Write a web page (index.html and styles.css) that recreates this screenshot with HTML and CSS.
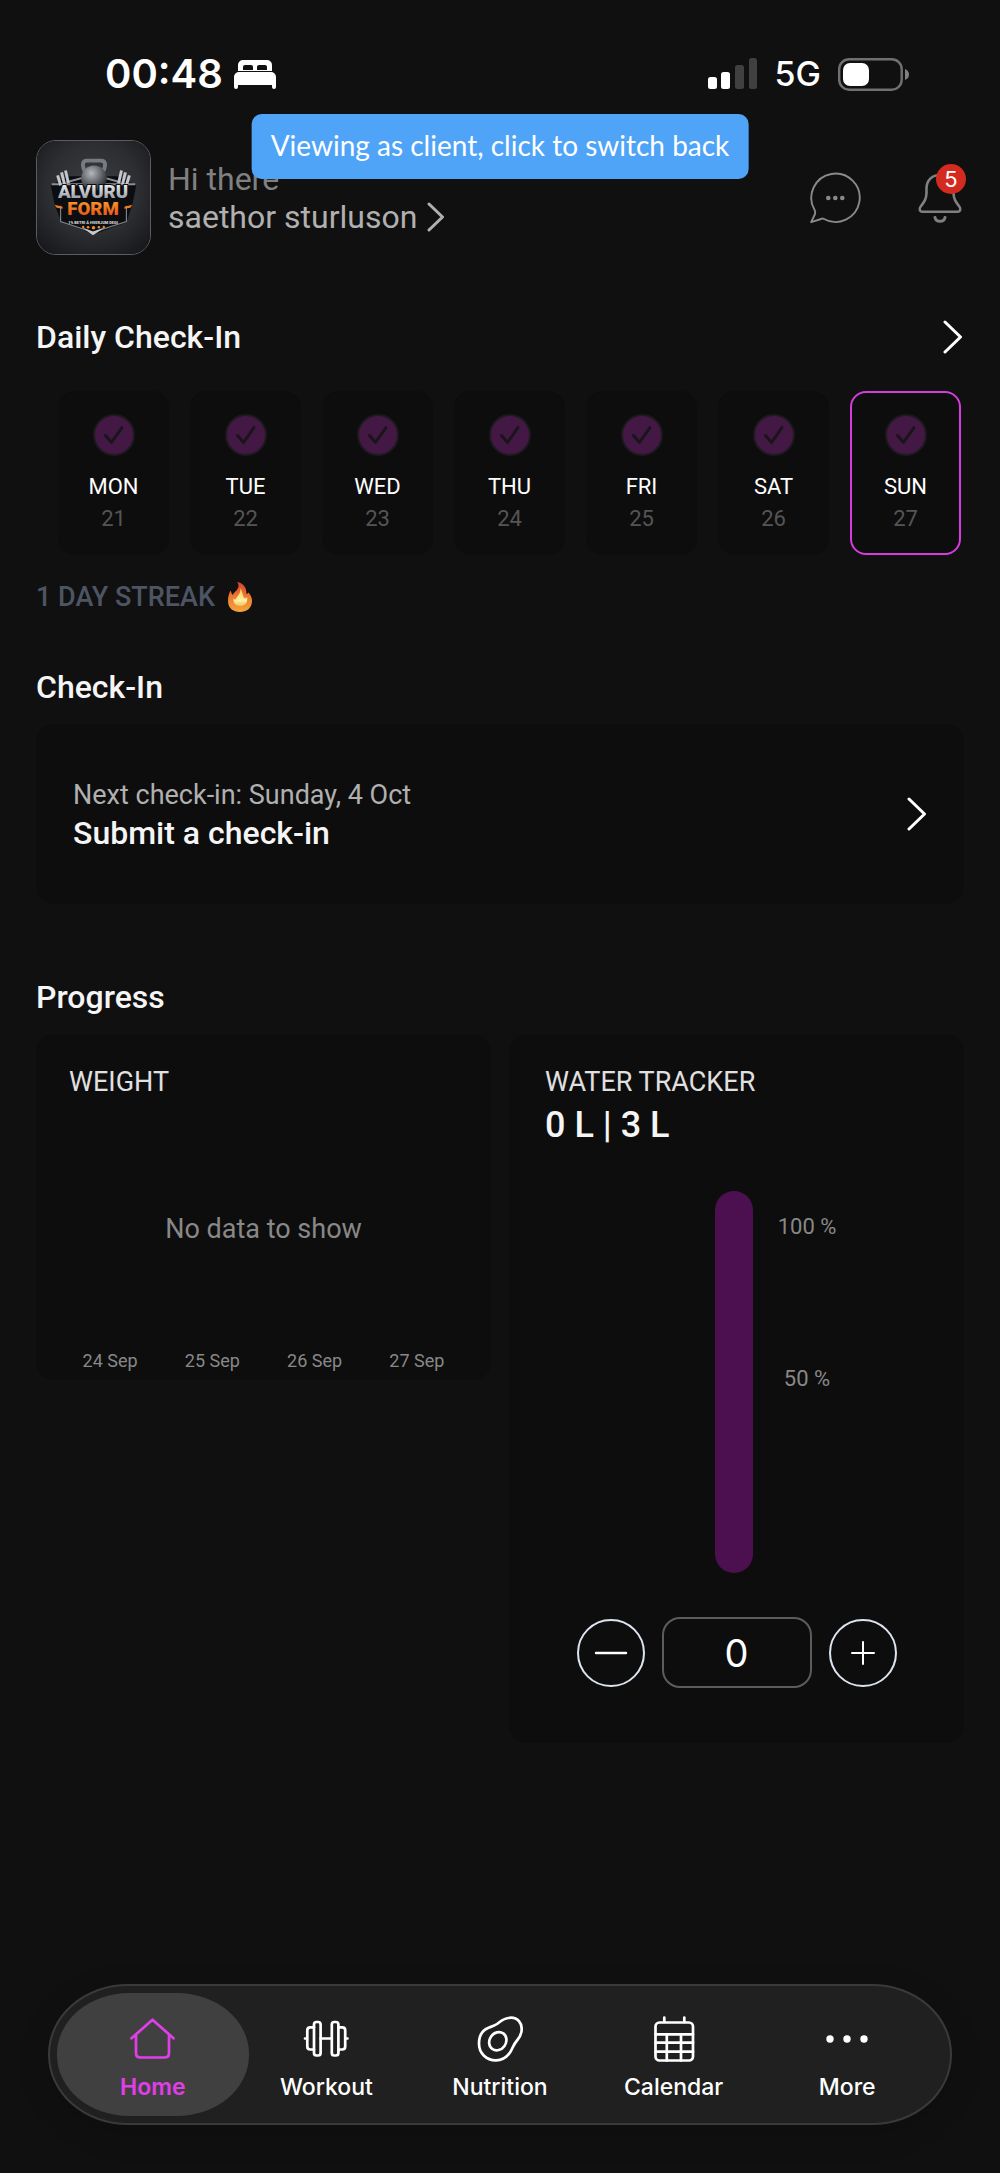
FILE: index.html
```html
<!DOCTYPE html>
<html lang="en">
<head>
<meta charset="utf-8">
<meta name="viewport" content="width=device-width, initial-scale=1">
<title>Alvuru Form – Home</title>
<link rel="stylesheet" href="styles.css">
</head>
<body>
<div class="app">
  <div class="status">
    <div class="status-side">
      <span class="clock">00:48</span>
      <svg class="bed" viewBox="0 0 44 31" role="img" aria-label="Sleep focus">
        <path fill="#fff" fill-rule="evenodd" d="M5 12V6a5 5 0 0 1 5-5h24a5 5 0 0 1 5 5v6zM10 11V8q0-2 2-2h6q2 0 2 2v3zM24 11V8q0-2 2-2h6q2 0 2 2v3z"/>
        <path fill="#fff" d="M1 28V18a5 5 0 0 1 5-5h32a5 5 0 0 1 5 5v10q0 2-2 2t-2-2v-2H5v2q0 2-2 2t-2-2z"/>
      </svg>
    </div>
    <div class="status-side status-right">
      <svg class="signal" viewBox="0 0 50 32" role="img" aria-label="Signal">
        <rect x="0" y="19" width="9" height="12" rx="2.500" fill="#fff"/>
        <rect x="13" y="14" width="9" height="17" rx="2.500" fill="#fff"/>
        <rect x="27" y="7" width="9" height="24" rx="2.500" fill="#404040"/>
        <rect x="41" y="0" width="8" height="31" rx="2.500" fill="#404040"/>
      </svg>
      <span class="network">5G</span>
      <svg class="battery" viewBox="0 0 72 33" role="img" aria-label="Battery">
        <rect x="1.200" y="1.200" width="62.500" height="30.500" rx="10" fill="none" stroke="#707070" stroke-width="2.400"/>
        <rect x="5" y="5" width="26" height="23" rx="7" fill="#fff"/>
        <path d="M67 11q4 1.500 4 5.500t-4 5.500z" fill="#808080"/>
      </svg>
    </div>
  </div>

  <button class="banner" type="button">Viewing as client, click to switch back</button>

  <header class="header">
    <a class="avatar" href="#profile" aria-label="Profile">
      <svg viewBox="0 0 115 115" aria-hidden="true">
        <defs>
          <radialGradient id="wall" cx="50%" cy="42%" r="72%"><stop offset="0" stop-color="#3b3d41"/><stop offset=".55" stop-color="#2c2e32"/><stop offset="1" stop-color="#15171a"/></radialGradient>
          <linearGradient id="steel" x1="0" y1="0" x2="0" y2="1"><stop offset="0" stop-color="#fff"/><stop offset="1" stop-color="#81868f"/></linearGradient>
          <linearGradient id="fire" x1="0" y1="0" x2="0" y2="1"><stop offset="0" stop-color="#ffa52e"/><stop offset="1" stop-color="#dc4516"/></linearGradient>
          <radialGradient id="ball" cx="40%" cy="30%" r="70%"><stop offset="0" stop-color="#b4b7bc"/><stop offset="1" stop-color="#26282c"/></radialGradient>
        </defs>
        <rect width="115" height="115" fill="url(#wall)"/>
        <path d="M14 45L33 36H82L101 45L97 65L91 83L58 95L25 83L18 65Z" fill="#0b0d11"/>
        <path d="M24 66V82L57 93L91 82V66" fill="none" stroke="#7d8188" stroke-width="1.200"/>
        <path d="M46 88L57 92L69 88L57 96Z" fill="#c5c8cd"/>
        <path d="M15 44L100 44M30 42L48 37M85 42L67 37" stroke="#8b8f96" stroke-width="2"/>
        <path d="M21 35l3 10M25 32l3 12M29 30l3 13M94 35l-3 10M90 32l-3 12M86 30l-3 13" stroke="#c3c6cb" stroke-width="3"/>
        <path d="M50 34Q43 20 51 20H65Q73 20 66 34" fill="none" stroke="#777b82" stroke-width="4"/>
        <circle cx="58" cy="38" r="13" fill="url(#ball)"/>
        <g font-family="Roboto, sans-serif" text-anchor="middle" font-weight="900">
          <text x="57" y="58" font-size="19" fill="url(#steel)" stroke="#0b0d11" stroke-width="2" paint-order="stroke">ALVURU</text>
          <text x="57" y="75" font-size="19" fill="url(#fire)" stroke="#0b0d11" stroke-width="2" paint-order="stroke">FORM</text>
          <text x="57" y="84" font-size="4" fill="#d5d5d5">1% BETRI Á HVERJUM DEGI</text>
        </g>
        <g fill="#f08a28"><circle cx="47" cy="87.500" r="1.200"/><circle cx="52" cy="87.800" r="1.300"/><circle cx="57.500" cy="88.200" r="1.800"/><circle cx="63" cy="87.800" r="1.300"/><circle cx="68" cy="87.500" r="1.200"/></g>
        <path d="M18 65l8 2v2l-6-1zM97 65l-8 2v2l6-1z" fill="#ee7a22"/>
      </svg>
    </a>
    <a class="greeting" href="#profile">
      <span class="hello">Hi there</span>
      <span class="name">saethor sturluson
        <svg class="chevron-small" viewBox="0 0 18 30" aria-hidden="true"><path d="M2 2L15.500 15L2 28"/></svg>
      </span>
    </a>
    <div class="actions">
      <button class="icon-button" type="button" aria-label="Messages">
        <svg viewBox="0 0 52 52" aria-hidden="true">
          <path d="M14.500 46.800A24.200 24.200 0 1 0 5.500 37.800Q6.500 39.500 6 42L2.200 50.200L12 47Q13.300 46.200 14.500 46.800Z" fill="none" stroke="#8a8a8a" stroke-width="1.900" stroke-linejoin="round"/>
          <g fill="#8a8a8a"><circle cx="19.300" cy="26" r="2.300"/><circle cx="26.300" cy="26" r="2.300"/><circle cx="33.300" cy="26" r="2.300"/></g>
        </svg>
      </button>
      <button class="icon-button" type="button" aria-label="Notifications">
        <svg viewBox="0 0 52 52" aria-hidden="true">
          <g fill="none" stroke="#808080" stroke-width="2.600" stroke-linecap="round">
            <path d="M26 3C18 3 12.700 8.500 12.500 16V21C12.300 27 10.500 29.500 6.700 34.500C4.500 37.500 6 39.700 8.500 39.700H43.500C46 39.700 47.500 37.500 45.300 34.500C41.500 29.500 39.700 27 39.500 21V16C39.300 8.500 34 3 26 3Z"/>
            <path d="M21 45.500C22 50.600 30 50.600 31 45.500" stroke-width="3"/>
          </g>
        </svg>
        <span class="badge">5</span>
      </button>
    </div>
  </header>

  <main class="main">
    <section class="daily">
      <div class="section-head">
        <h2>Daily Check-In</h2>
        <a href="#daily" aria-label="Open daily check-in"><svg class="chevron" viewBox="0 0 20 34" aria-hidden="true"><path d="M2 2L17.500 17L2 32"/></svg></a>
      </div>
      <ol class="days">
        <li class="day"><svg class="tick" viewBox="0 0 40 40" aria-hidden="true"><circle cx="20" cy="20" r="20"/><path d="M11.500 20.500L17.500 27.500L28 12.500"/></svg><span>MON</span><span class="date">21</span></li>
        <li class="day"><svg class="tick" viewBox="0 0 40 40" aria-hidden="true"><circle cx="20" cy="20" r="20"/><path d="M11.500 20.500L17.500 27.500L28 12.500"/></svg><span>TUE</span><span class="date">22</span></li>
        <li class="day"><svg class="tick" viewBox="0 0 40 40" aria-hidden="true"><circle cx="20" cy="20" r="20"/><path d="M11.500 20.500L17.500 27.500L28 12.500"/></svg><span>WED</span><span class="date">23</span></li>
        <li class="day"><svg class="tick" viewBox="0 0 40 40" aria-hidden="true"><circle cx="20" cy="20" r="20"/><path d="M11.500 20.500L17.500 27.500L28 12.500"/></svg><span>THU</span><span class="date">24</span></li>
        <li class="day"><svg class="tick" viewBox="0 0 40 40" aria-hidden="true"><circle cx="20" cy="20" r="20"/><path d="M11.500 20.500L17.500 27.500L28 12.500"/></svg><span>FRI</span><span class="date">25</span></li>
        <li class="day"><svg class="tick" viewBox="0 0 40 40" aria-hidden="true"><circle cx="20" cy="20" r="20"/><path d="M11.500 20.500L17.500 27.500L28 12.500"/></svg><span>SAT</span><span class="date">26</span></li>
        <li class="day today"><svg class="tick" viewBox="0 0 40 40" aria-hidden="true"><circle cx="20" cy="20" r="20"/><path d="M11.500 20.500L17.500 27.500L28 12.500"/></svg><span>SUN</span><span class="date">27</span></li>
      </ol>
      <p class="streak">1 DAY STREAK
        <svg class="flame" viewBox="0 0 26 32" role="img" aria-label="Fire">
          <defs>
            <linearGradient id="flame-outer" x1="0" y1="0" x2="0" y2="1"><stop offset="0" stop-color="#d8402c"/><stop offset=".5" stop-color="#ee7b31"/><stop offset="1" stop-color="#f5a53c"/></linearGradient>
            <linearGradient id="flame-inner" x1="0" y1="0" x2="0" y2="1"><stop offset="0" stop-color="#fbd04f"/><stop offset=".7" stop-color="#fdf0a8"/><stop offset="1" stop-color="#f8c04c"/></linearGradient>
          </defs>
          <path fill="url(#flame-outer)" d="M10 1C17 2 19.500 7 19.500 13C20.500 13 21 12 21.500 11.500C24.500 15 25.300 18 25 21C24.300 27.500 19.500 31 13 31C6 31 1 27 1 20C1 16 2 12 3.500 9.500C4.500 11 4.500 13 5.500 14C6.500 12 11 9 11.500 5.500C11.700 3.500 11 2 10 1Z"/>
          <path fill="url(#flame-inner)" d="M13.500 7C16 12 15.500 15.500 18 17.500C19 17.500 19.500 16.500 20 16C21 19 19.500 25 13.500 25C8.500 25 6 21.500 6.500 17.500C7.500 18 8 19 8.500 18.500C10 15.500 14 12.500 13.500 7Z"/>
        </svg>
      </p>
    </section>

    <section class="checkin">
      <h2>Check-In</h2>
      <a class="card checkin-card" href="#check-in">
        <span class="checkin-text">
          <span class="next">Next check-in: Sunday, 4 Oct</span>
          <span class="submit">Submit a check-in</span>
        </span>
        <svg class="chevron" viewBox="0 0 20 34" aria-hidden="true"><path d="M2 2L17.500 17L2 32"/></svg>
      </a>
    </section>

    <section class="progress">
      <h2>Progress</h2>
      <div class="tiles">
        <article class="card weight">
          <h3>WEIGHT</h3>
          <p class="empty">No data to show</p>
          <ol class="axis"><li>24 Sep</li><li>25 Sep</li><li>26 Sep</li><li>27 Sep</li></ol>
        </article>
        <article class="card water">
          <h3>WATER TRACKER</h3>
          <p class="amount">0 L | 3 L</p>
          <div class="gauge">
            <div class="tube"></div>
            <div class="marks"><span>100 %</span><span>50 %</span></div>
          </div>
          <div class="stepper">
            <button class="round" type="button" aria-label="Remove water"><svg viewBox="0 0 34 34" aria-hidden="true"><path d="M2 17H32" stroke-width="2.400"/></svg></button>
            <input class="count" type="text" inputmode="numeric" value="0" aria-label="Water amount">
            <button class="round" type="button" aria-label="Add water"><svg viewBox="0 0 34 34" aria-hidden="true"><path d="M6 17H28M17 6V28" stroke-width="2"/></svg></button>
          </div>
        </article>
      </div>
    </section>
  </main>

  <nav class="tabs" aria-label="Main">
    <a class="tab active" href="#home" aria-current="page">
      <svg viewBox="0 0 46 46" aria-hidden="true"><path d="M1.500 22.300L22.500 3.700L43.500 22.300M6 18.500V37Q6 41.500 10.500 41.500H34.500Q39 41.500 39 37V18.500"/></svg>
      <span>Home</span>
    </a>
    <a class="tab" href="#workout">
      <svg viewBox="0 0 46 46" aria-hidden="true"><rect x="11" y="6" width="6.600" height="33.500" rx="2.500"/><rect x="28.800" y="6" width="6.600" height="33.500" rx="2.500"/><path d="M11 11.300H7.300Q4.300 11.300 4.300 14.300V30.500Q4.300 33.500 7.300 33.500H11M35.400 11.300H39.200Q42.200 11.300 42.200 14.300V30.500Q42.200 33.500 39.200 33.500H35.400M2 22.500H4M17.600 22.500H28.800M42.400 22.500H44.500"/></svg>
      <span>Workout</span>
    </a>
    <a class="tab" href="#nutrition">
      <svg viewBox="0 0 46 46" aria-hidden="true"><path d="M34 1.700C41 1.700 44.700 7 44.700 13C44.700 18 43 21 40 24.500C36 29 36 32 33 36.500C29.500 41.500 25 44.300 19 44.300C9 44.300 2 37 2 27.500C2 20 5 14.500 11 12C14 10.700 17 10 20 8C24 5 27 1.700 34 1.700Z"/><ellipse cx="20.800" cy="25.200" rx="8.200" ry="9.500" transform="rotate(35 20.800 25.200)"/></svg>
      <span>Nutrition</span>
    </a>
    <a class="tab" href="#calendar">
      <svg viewBox="0 0 46 46" aria-hidden="true"><rect x="4.500" y="6.500" width="37.500" height="38" rx="4"/><path d="M13.300 1.500V6M33.300 1.500V6M4.500 18.300H42M4.500 26.700H42M4.500 35.700H42M15.800 18.300V44.500M30 18.300V44.500"/></svg>
      <span>Calendar</span>
    </a>
    <a class="tab" href="#more">
      <svg viewBox="0 0 46 46" aria-hidden="true"><g fill="#fff" stroke="none"><circle cx="6" cy="23" r="3.700"/><circle cx="23" cy="23" r="3.700"/><circle cx="40" cy="23" r="3.700"/></g></svg>
      <span>More</span>
    </a>
  </nav>
</div>
</body>
</html>
```
FILE: styles.css
```css
* { box-sizing: border-box; }

body {
  margin: 0;
  background: #101010;
  color: #f5f5f5;
  font-family: Roboto, "Liberation Sans", sans-serif;
}

h2, h3, p, ol { margin: 0; padding: 0; list-style: none; font-weight: 400; }
a { color: inherit; text-decoration: none; }
button, input { font: inherit; color: inherit; background: none; border: 0; padding: 0; }
svg { display: block; flex: none; }

.app {
  position: relative;
  display: flex;
  flex-direction: column;
  min-height: 100vh;
  padding-bottom: 48px;
}

/* Status bar */
.status {
  display: flex;
  justify-content: space-between;
  padding: 54px 90px 0 105px;
  color: #fff;
  font-family: Inter, "Liberation Sans", sans-serif;
}
.status-side { display: flex; align-items: center; height: 40px; gap: 10px; }
.status-right { gap: 17px; }
.clock { font-size: 40px; line-height: 40px; font-weight: 600; }
.bed { width: 44px; height: 31px; }
.signal { width: 50px; height: 32px; }
.network { font-size: 34px; line-height: 40px; font-weight: 500; }
.battery { width: 72px; height: 33px; }

/* Client-view banner, floats over the header */
.banner {
  position: absolute;
  top: 114px;
  left: 50%;
  transform: translateX(-50%);
  z-index: 2;
  padding: 15px 19px 17px;
  border-radius: 10px;
  background: #4fa4f8;
  color: #fff;
  font-family: Lato, sans-serif;
  font-size: 28px;
  line-height: 33px;
  white-space: nowrap;
}

/* Header */
.header {
  display: flex;
  align-items: center;
  padding: 46px 34px 0 36px;
}
.avatar {
  width: 115px;
  height: 115px;
  border: 1px solid #5a5c5f;
  border-radius: 20px;
  overflow: hidden;
}
.greeting {
  display: flex;
  flex-direction: column;
  margin-left: 17px;
  font-size: 32px;
  line-height: 38px;
}
.hello { color: #808080; }
.name { display: flex; align-items: center; gap: 10px; color: #b0b0b0; }
.chevron-small { width: 18px; height: 30px; }
.chevron { width: 20px; height: 34px; }
.chevron path, .chevron-small path {
  fill: none;
  stroke: #fff;
  stroke-width: 3;
  stroke-linecap: round;
  stroke-linejoin: round;
}
.chevron-small path { stroke: #b0b0b0; }
.actions { display: flex; gap: 53px; margin-left: auto; }
.icon-button { position: relative; width: 52px; height: 52px; }
.icon-button svg { width: 52px; height: 52px; }
.badge {
  position: absolute;
  top: -8px;
  right: 0;
  width: 30px;
  height: 30px;
  border-radius: 50%;
  background: #d32b20;
  color: #fff;
  font-family: Inter, sans-serif;
  font-size: 22px;
  line-height: 30px;
  text-align: center;
}

/* Content */
.main {
  flex: 1;
  padding: 62px 36px 48px;
}
h2 { font-size: 32px; line-height: 40px; font-weight: 500; }
h3 { font-size: 27px; line-height: 32px; color: #e0e0e0; }
.card { border-radius: 18px; background: #0d0d0d; }

.section-head { display: flex; justify-content: space-between; align-items: center; padding-right: 1px; }
.days {
  display: grid;
  grid-template-columns: repeat(7, 1fr);
  gap: 21px;
  margin: 34px 3px 0 22px;
}
.day {
  display: flex;
  flex-direction: column;
  align-items: center;
  padding: 22px 0 18px;
  border: 2px solid #0d0d0d;
  border-radius: 16px;
  background: #0d0d0d;
  color: #fff;
  font-size: 22px;
  line-height: 32px;
}
.today { border-color: #d63be0; }
.date { color: #555; }
.tick { width: 40px; height: 40px; margin-bottom: 16px; overflow: visible; }
.tick circle { fill: #431845; stroke: #1d1a1e; stroke-width: 2; }
.tick path { fill: none; stroke: #1a141b; stroke-width: 3; stroke-linecap: round; stroke-linejoin: round; }
.streak {
  display: flex;
  align-items: center;
  gap: 12px;
  margin-top: 26px;
  color: #4d5564;
  font-size: 27px;
  line-height: 32px;
  font-weight: 500;
}
.flame { width: 26px; height: 32px; }

.checkin { margin-top: 54px; }
.checkin-card {
  display: flex;
  align-items: center;
  justify-content: space-between;
  margin-top: 17px;
  padding: 52px 37px;
}
.checkin-text { display: flex; flex-direction: column; line-height: 38px; }
.next { font-size: 27px; color: #b0b0b0; }
.submit { font-size: 32px; font-weight: 500; }

.progress { margin-top: 73px; }
.tiles {
  display: grid;
  grid-template-columns: 1fr 1fr;
  align-items: start;
  gap: 18px;
  margin-top: 17px;
}
.weight { padding: 32px 23px 7px; }
.weight h3 { padding-left: 10px; }
.empty {
  margin-top: 115px;
  color: #888;
  font-size: 27px;
  line-height: 32px;
  text-align: center;
}
.axis {
  display: grid;
  grid-template-columns: repeat(4, 1fr);
  margin-top: 104px;
  color: #888;
  font-size: 18px;
  line-height: 24px;
  text-align: center;
}
.water { padding: 32px 36px 55px; }
.amount { margin-top: 5px; font-size: 36px; line-height: 44px; font-weight: 500; }
.gauge {
  display: grid;
  grid-template-columns: 1fr 38px 1fr;
  margin-top: 44px;
  padding-right: 5px;
}
.tube {
  grid-column: 2;
  height: 382px;
  border-radius: 19px;
  background: #4c0f50;
}
.marks {
  display: flex;
  flex-direction: column;
  gap: 124px;
  width: 60px;
  margin: 22px 0 0 24px;
  color: #888;
  font-size: 22px;
  line-height: 28px;
  text-align: center;
}
.stepper { display: flex; justify-content: center; align-items: center; gap: 17px; margin-top: 44px; }
.round {
  display: grid;
  place-items: center;
  width: 68px;
  height: 68px;
  border: 2px solid #dce4f0;
  border-radius: 50%;
}
.round svg { width: 34px; height: 34px; }
.round path { stroke: #fff; stroke-linecap: round; }
.count {
  width: 150px;
  height: 71px;
  border: 2px solid #5c5c5c;
  border-radius: 18px;
  color: #fff;
  font-family: Inter, sans-serif;
  font-size: 38px;
  text-align: center;
}

/* Tab bar */
.tabs {
  display: grid;
  grid-template-columns: repeat(5, 1fr);
  margin: 0 48px;
  padding: 7px 16px;
  border: 2px solid #3a3a3a;
  border-radius: 80px / 70px;
  background: #202020;
  box-shadow: 0 8px 32px rgba(0, 0, 0, .15);
  font-family: Inter, "Liberation Sans", sans-serif;
  font-size: 23px;
  line-height: 28px;
  font-weight: 500;
}
.tab {
  position: relative;
  display: flex;
  flex-direction: column;
  align-items: center;
  gap: 11px;
  padding: 23px 0 15px;
  color: #fff;
}
.tab svg {
  position: relative;
  width: 46px;
  height: 46px;
  fill: none;
  stroke: currentColor;
  stroke-width: 2.7;
  stroke-linecap: round;
  stroke-linejoin: round;
}
.tab span { position: relative; }
.active { color: #e03fe8; font-weight: 600; }
.active::before {
  content: "";
  position: absolute;
  inset: 0 -9px;
  border-radius: 72px / 61px;
  background: #404040;
}
```
